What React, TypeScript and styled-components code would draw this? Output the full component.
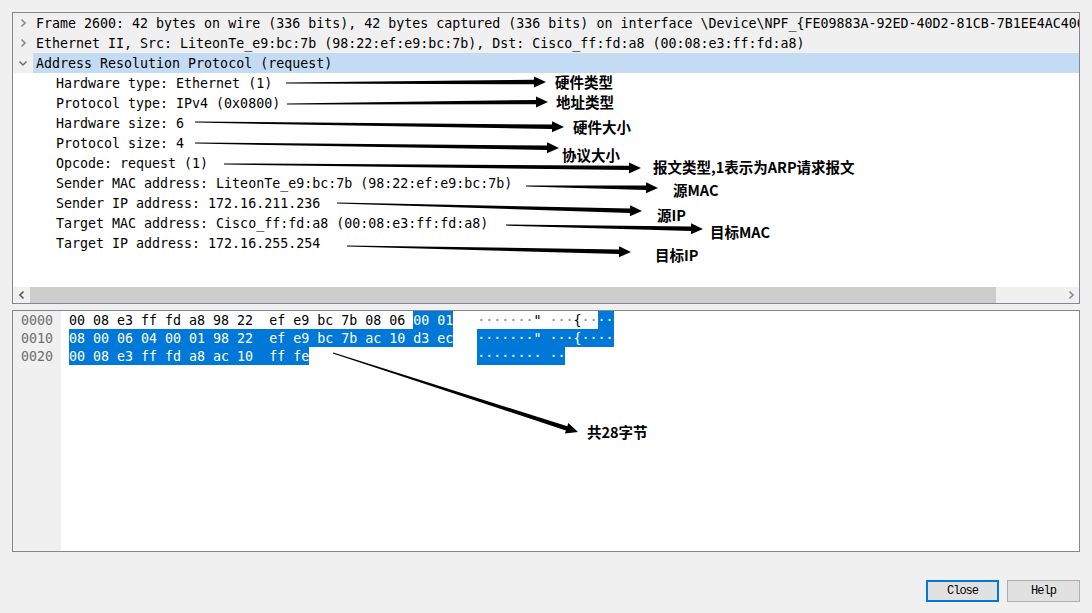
import styled, { createGlobalStyle } from 'styled-components';

const GlobalStyle = createGlobalStyle`
  html, body {
    margin: 0;
    padding: 0;
    background: #f0f0f0;
  }
`;

type Tone = 'plain' | 'muted' | 'selected';
type Expander = 'closed' | 'open' | 'none';

interface TreeRow {
  text: string;
  level: number;
  expander: Expander;
  tone: Tone;
}

const treeRows: TreeRow[] = [
  {
    text: 'Frame 2600: 42 bytes on wire (336 bits), 42 bytes captured (336 bits) on interface \\Device\\NPF_{FE09883A-92ED-40D2-81CB-7B1EE4AC4066}, id 0',
    level: 0,
    expander: 'closed',
    tone: 'muted',
  },
  {
    text: 'Ethernet II, Src: LiteonTe_e9:bc:7b (98:22:ef:e9:bc:7b), Dst: Cisco_ff:fd:a8 (00:08:e3:ff:fd:a8)',
    level: 0,
    expander: 'closed',
    tone: 'muted',
  },
  { text: 'Address Resolution Protocol (request)', level: 0, expander: 'open', tone: 'selected' },
  { text: 'Hardware type: Ethernet (1)', level: 1, expander: 'none', tone: 'plain' },
  { text: 'Protocol type: IPv4 (0x0800)', level: 1, expander: 'none', tone: 'plain' },
  { text: 'Hardware size: 6', level: 1, expander: 'none', tone: 'plain' },
  { text: 'Protocol size: 4', level: 1, expander: 'none', tone: 'plain' },
  { text: 'Opcode: request (1)', level: 1, expander: 'none', tone: 'plain' },
  { text: 'Sender MAC address: LiteonTe_e9:bc:7b (98:22:ef:e9:bc:7b)', level: 1, expander: 'none', tone: 'plain' },
  { text: 'Sender IP address: 172.16.211.236', level: 1, expander: 'none', tone: 'plain' },
  { text: 'Target MAC address: Cisco_ff:fd:a8 (00:08:e3:ff:fd:a8)', level: 1, expander: 'none', tone: 'plain' },
  { text: 'Target IP address: 172.16.255.254', level: 1, expander: 'none', tone: 'plain' },
];

interface Seg {
  t: string;
  hl?: boolean;
}

interface HexRow {
  offset: string;
  hex: Seg[];
  ascii: Seg[];
}

const hexRows: HexRow[] = [
  {
    offset: '0000',
    hex: [{ t: '00 08 e3 ff fd a8 98 22  ef e9 bc 7b 08 06 ' }, { t: '00 01', hl: true }],
    ascii: [{ t: '·······" ···{··' }, { t: '··', hl: true }],
  },
  {
    offset: '0010',
    hex: [{ t: '08 00 06 04 00 01 98 22  ef e9 bc 7b ac 10 d3 ec', hl: true }],
    ascii: [{ t: '·······" ···{····', hl: true }],
  },
  {
    offset: '0020',
    hex: [{ t: '00 08 e3 ff fd a8 ac 10  ff fe', hl: true }],
    ascii: [{ t: '········ ··', hl: true }],
  },
];

interface Note {
  from: [number, number];
  to: [number, number];
  label: string;
  lx: number;
  ly: number;
}

const notes: Note[] = [
  { from: [286, 83], to: [546, 82], label: '硬件类型', lx: 555, ly: 82 },
  { from: [287, 104], to: [548, 102], label: '地址类型', lx: 556, ly: 102 },
  { from: [195, 122], to: [564, 127], label: '硬件大小', lx: 573, ly: 127 },
  { from: [195, 143], to: [559, 148], label: '协议大小', lx: 562, ly: 155 },
  { from: [224, 164], to: [641, 168], label: '报文类型,1表示为ARP请求报文', lx: 653, ly: 167 },
  { from: [526, 186], to: [658, 188], label: '源MAC', lx: 673, ly: 190 },
  { from: [337, 203], to: [642, 211], label: '源IP', lx: 657, ly: 215 },
  { from: [506, 225], to: [703, 229], label: '目标MAC', lx: 710, ly: 232 },
  { from: [347, 246], to: [631, 252], label: '目标IP', lx: 655, ly: 255 },
  { from: [333, 353], to: [578, 432], label: '共28字节', lx: 587, ly: 432 },
];

// tapered shaft that thickens toward a solid triangular head
function arrowPoints(n: Note) {
  const [x1, y1] = n.from;
  const [x2, y2] = n.to;
  const len = Math.hypot(x2 - x1, y2 - y1);
  const ux = (x2 - x1) / len;
  const uy = (y2 - y1) / len;
  const nx = -uy;
  const ny = ux;
  const head = 12;
  const bx = x2 - ux * head;
  const by = y2 - uy * head;
  const p = (x: number, y: number, w: number) => `${(x + nx * w).toFixed(1)},${(y + ny * w).toFixed(1)}`;
  return [
    p(x1, y1, 0.6),
    p(bx, by, 2.2),
    p(bx, by, 5.5),
    `${x2},${y2}`,
    p(bx, by, -5.5),
    p(bx, by, -2.2),
    p(x1, y1, -0.6),
  ].join(' ');
}

const mono = `"DejaVu Sans Mono", "Liberation Mono", monospace`;

const Dialog = styled.div`
  position: relative;
  box-sizing: border-box;
  width: 1092px;
  height: 613px;
  padding: 12px 12px 0;
  display: flex;
  flex-direction: column;
  background: #f0f0f0;
  overflow: hidden;
`;

const TreePane = styled.div`
  box-sizing: border-box;
  height: 292px;
  border: 1px solid #828790;
  background: #ffffff;
  display: flex;
  flex-direction: column;
`;

const TreeBody = styled.div`
  flex: 1;
  overflow: hidden;
`;

const Row = styled.div<{ $tone: Tone }>`
  display: flex;
  height: 20px;
  background: ${(p) => (p.$tone === 'plain' ? '#ffffff' : '#f0f0f0')};
`;

const Branch = styled.div`
  flex: 0 0 20px;
  display: flex;
  align-items: center;
  justify-content: center;
`;

const RowText = styled.div<{ $tone: Tone; $level: number }>`
  flex: 1;
  min-width: 0;
  box-sizing: border-box;
  padding: 1px 0 0 ${(p) => 3 + p.$level * 20}px;
  font-family: ${mono};
  font-size: 13.3px;
  line-height: 19px;
  color: #000000;
  white-space: pre;
  overflow: hidden;
  background: ${(p) => (p.$tone === 'selected' ? '#c4dcf3' : 'transparent')};
`;

const HScroll = styled.div`
  flex: 0 0 16px;
  display: flex;
  background: #f0f0f0;
`;

const ScrollArrow = styled.div`
  flex: 0 0 17px;
  display: flex;
  align-items: center;
  justify-content: center;
`;

const ScrollTrack = styled.div`
  flex: 1;
  display: flex;
`;

const ScrollThumb = styled.div`
  width: 966px;
  background: #cdcdcd;
`;

const HexPane = styled.div`
  box-sizing: border-box;
  margin-top: 6px;
  height: 242px;
  border: 1px solid #828790;
  background: #ffffff;
  display: flex;
`;

const OffsetCol = styled.div`
  flex: 0 0 48px;
  box-sizing: border-box;
  padding-left: 8px;
  background: #f0f0f0;
  font-family: ${mono};
  font-size: 13.3px;
  line-height: 18px;
  color: #6e6e6e;
`;

const HexBody = styled.div`
  flex: 1;
  padding-left: 8px;
  font-family: ${mono};
  font-size: 13.3px;
  line-height: 18px;
  color: #000000;
`;

const HexLine = styled.div`
  height: 18px;
  line-height: 19px;
  white-space: pre;
`;

const Dot = styled.span`
  color: #8a8a8a;
`;

const Chunk = styled.span<{ $hl?: boolean }>`
  display: inline-block;
  height: 18px;
  background: ${(p) => (p.$hl ? '#0078d7' : 'transparent')};
  color: ${(p) => (p.$hl ? '#ffffff' : '#000000')};

  ${Dot} {
    color: ${(p) => (p.$hl ? '#ffffff' : '#8a8a8a')};
  }
`;

const Gap = styled.span`
  white-space: pre;
`;

const Footer = styled.div`
  margin-top: 28px;
  display: flex;
  justify-content: flex-end;
  gap: 8px;
`;

const DialogButton = styled.button<{ $focused?: boolean }>`
  box-sizing: border-box;
  width: 73px;
  height: 22px;
  padding: 0;
  background: #e1e1e1;
  border: ${(p) => (p.$focused ? '2px solid #0078d7' : '1px solid #adadad')};
  font-family: "Liberation Mono", monospace;
  font-size: 12px;
  letter-spacing: -1px;
  color: #000000;
`;

const Overlay = styled.svg`
  position: absolute;
  left: 0;
  top: 0;
  pointer-events: none;
`;

const NoteLabel = styled.span`
  position: absolute;
  font-family: "Noto Sans CJK SC", "Noto Sans", sans-serif;
  font-weight: 700;
  font-size: 14.5px;
  line-height: 15px;
  color: #000000;
  white-space: nowrap;
  text-shadow:
    1px 0 0 #ffffff,
    -1px 0 0 #ffffff,
    0 1px 0 #ffffff,
    0 -1px 0 #ffffff,
    1px 1px 1px #ffffff,
    -1px -1px 1px #ffffff,
    1px -1px 1px #ffffff,
    -1px 1px 1px #ffffff;
`;

function Chevron({ dir }: { dir: 'left' | 'right' | 'down' }) {
  if (dir === 'down') {
    return (
      <svg width="10" height="10" viewBox="0 0 10 10">
        <path d="M1.5 3.5 L5 7 L8.5 3.5" fill="none" stroke="#6e6e6e" strokeWidth="1.5" />
      </svg>
    );
  }
  const d = dir === 'right' ? 'M3.5 1.5 L7 5 L3.5 8.5' : 'M6.5 1.5 L3 5 L6.5 8.5';
  return (
    <svg width="10" height="10" viewBox="0 0 10 10">
      <path d={d} fill="none" stroke={dir === 'right' ? '#8a8a8a' : '#555555'} strokeWidth="1.6" />
    </svg>
  );
}

function AsciiText({ text }: { text: string }) {
  return (
    <>
      {Array.from(text).map((c, i) => (c === '·' ? <Dot key={i}>·</Dot> : <span key={i}>{c}</span>))}
    </>
  );
}

export default function App() {
  return (
    <>
      <GlobalStyle />
      <Dialog>
        <TreePane>
          <TreeBody>
            {treeRows.map((r, i) => (
              <Row key={i} $tone={r.tone}>
                <Branch>
                  {r.expander === 'closed' && <Chevron dir="right" />}
                  {r.expander === 'open' && <Chevron dir="down" />}
                </Branch>
                <RowText $tone={r.tone} $level={r.level}>
                  {r.text}
                </RowText>
              </Row>
            ))}
          </TreeBody>
          <HScroll>
            <ScrollArrow>
              <Chevron dir="left" />
            </ScrollArrow>
            <ScrollTrack>
              <ScrollThumb />
            </ScrollTrack>
            <ScrollArrow>
              <Chevron dir="right" />
            </ScrollArrow>
          </HScroll>
        </TreePane>

        <HexPane>
          <OffsetCol>
            {hexRows.map((r) => (
              <HexLine key={r.offset}>{r.offset}</HexLine>
            ))}
          </OffsetCol>
          <HexBody>
            {hexRows.map((r) => (
              <HexLine key={r.offset}>
                {r.hex.map((s, i) => (
                  <Chunk key={i} $hl={s.hl}>
                    {s.t}
                  </Chunk>
                ))}
                <Gap>{' '.repeat(3 + 48 - r.hex.reduce((n, s) => n + s.t.length, 0))}</Gap>
                {r.ascii.map((s, i) => (
                  <Chunk key={i} $hl={s.hl}>
                    <AsciiText text={s.t} />
                  </Chunk>
                ))}
              </HexLine>
            ))}
          </HexBody>
        </HexPane>

        <Footer>
          <DialogButton $focused>Close</DialogButton>
          <DialogButton>Help</DialogButton>
        </Footer>

        <Overlay width="1092" height="613" viewBox="0 0 1092 613">
          {notes.map((n, i) => (
            <polygon key={i} points={arrowPoints(n)} fill="#000000" />
          ))}
        </Overlay>
        {notes.map((n, i) => (
          <NoteLabel key={i} style={{ left: n.lx, top: n.ly - 8 }}>
            {n.label}
          </NoteLabel>
        ))}
      </Dialog>
    </>
  );
}
